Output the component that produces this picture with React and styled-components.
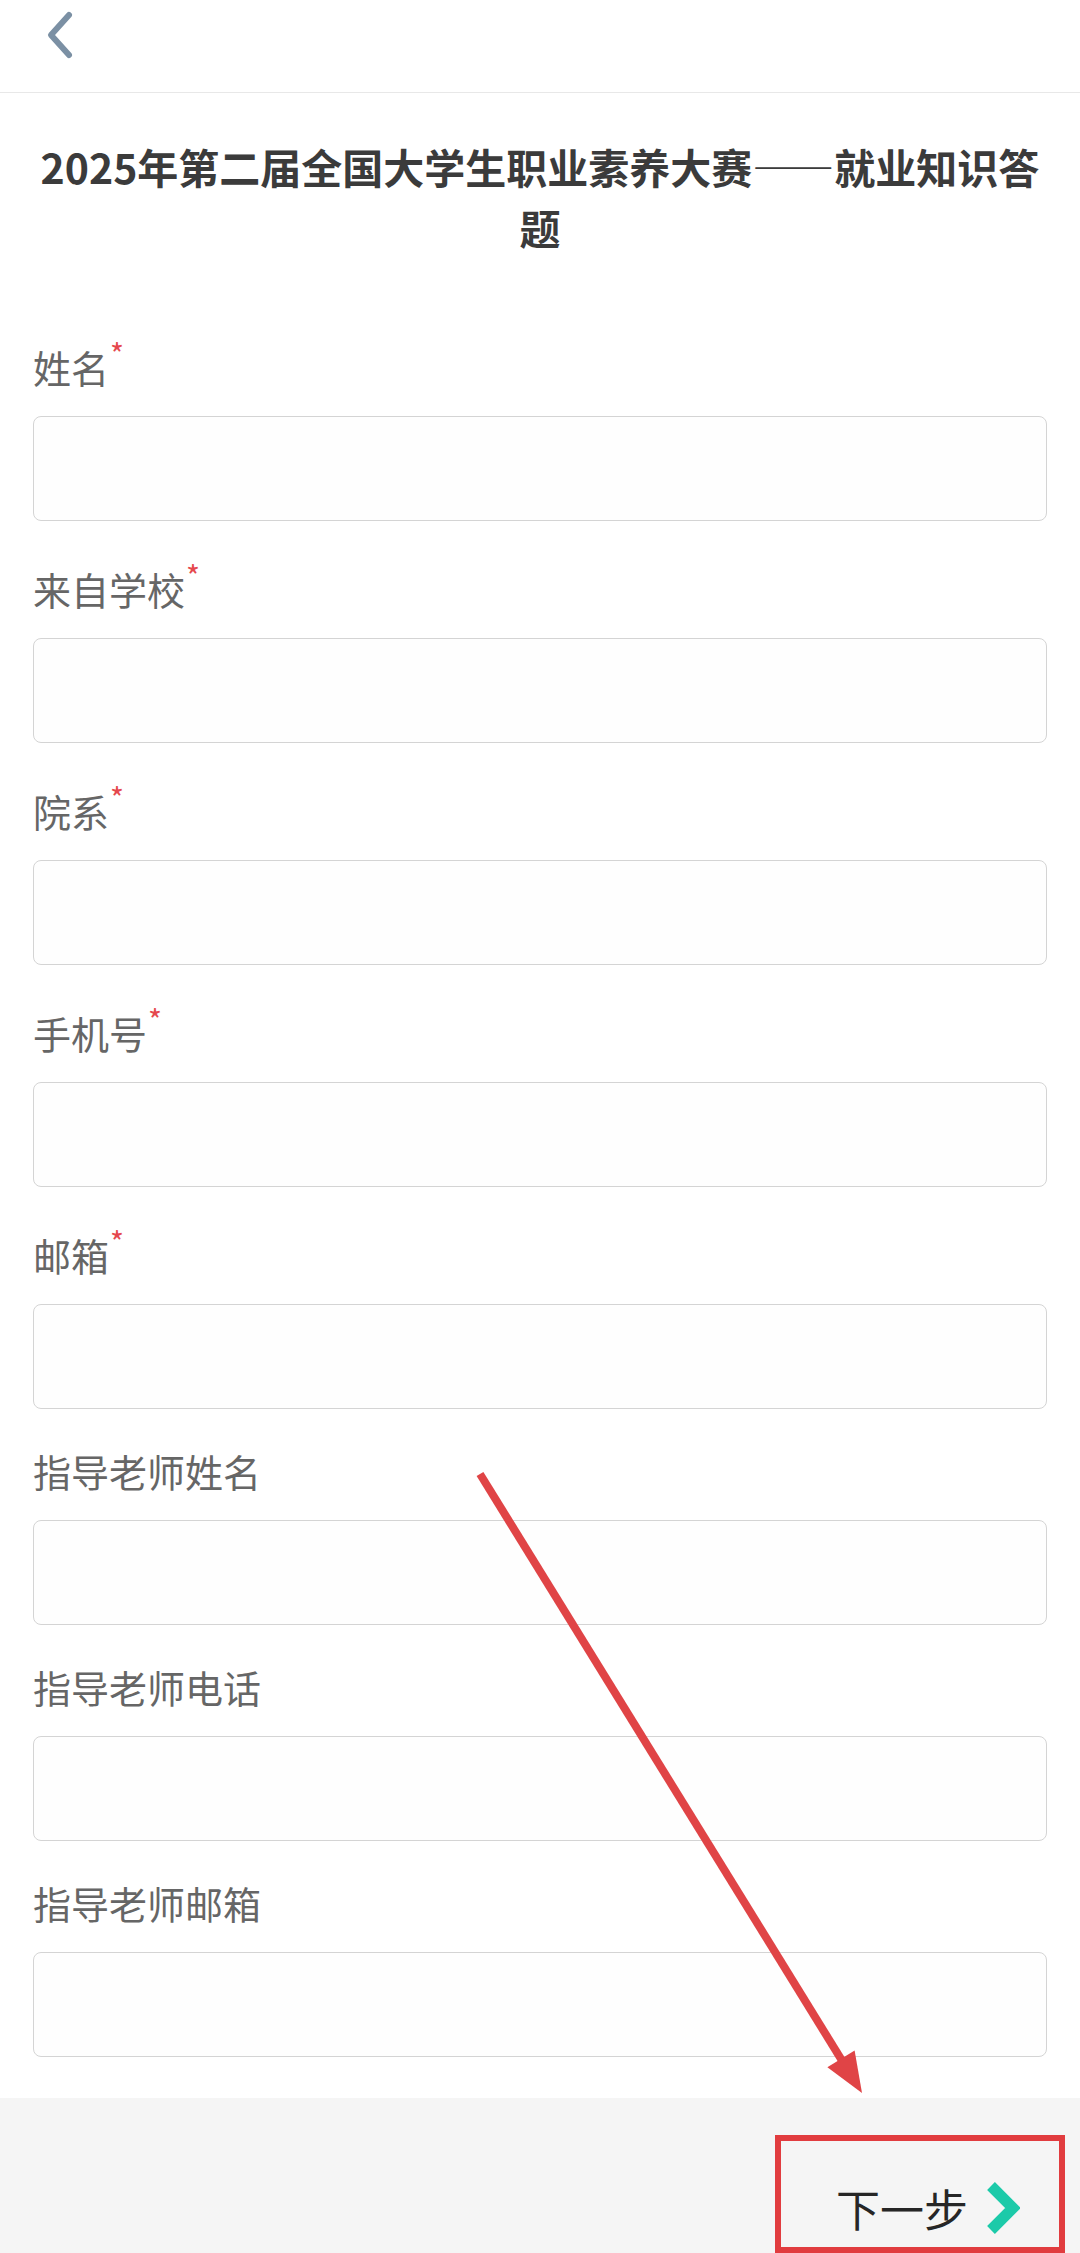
import React from 'react'
import styled, {createGlobalStyle} from 'styled-components'

const GlobalStyle = createGlobalStyle`
  html, body {
    margin: 0;
    padding: 0;
    background: #fff;
  }
  body {
    font-family: "Noto Sans CJK SC", "Noto Sans", sans-serif;
  }
  * {
    box-sizing: border-box;
  }
`

const Page = styled.div`
  position: relative;
  width: 1080px;
  min-height: 2253px;
  display: flex;
  flex-direction: column;
  background: #fff;
`

const Header = styled.header`
  height: 93px;
  display: flex;
  align-items: center;
  padding-left: 44px;
  border-bottom: 1px solid #e8e8e8;
`

const BackButton = styled.button`
  width: 34px;
  height: 50px;
  padding: 0;
  border: 0;
  background: none;
  display: flex;
  align-items: center;
  justify-content: center;
  margin-top: -22px;
`

const Title = styled.h1`
  margin: 43px 0 0;
  padding: 0 30px;
  font-size: 41px;
  line-height: 61px;
  font-weight: 700;
  color: #3b3b3b;
  text-align: center;
`

const Form = styled.form`
  display: flex;
  flex-direction: column;
  padding: 78px 33px 4px;
`

const Field = styled.div`
  display: flex;
  flex-direction: column;
  margin-bottom: 37px;
`

const Label = styled.label`
  padding-top: ${p => (p.$required ? '6px' : '0')};
  font-size: 38px;
  line-height: 50px;
  color: #666;
  margin-bottom: 24px;
`

const Star = styled.span`
  vertical-align: top;
  font-size: 30px;
  line-height: 1;
  color: #e5484d;
  margin-left: 1px;
  position: relative;
  top: -4px;
`

const Input = styled.input`
  height: 105px;
  width: 100%;
  border: 1.5px solid #d4d4d4;
  border-radius: 8px;
  background: #fefefe;
  padding: 0 24px;
  font-size: 34px;
  font-family: inherit;
  outline: none;
`

const Footer = styled.footer`
  position: relative;
  flex: 1;
  min-height: 155px;
  background: #f5f5f5;
  display: flex;
  justify-content: flex-end;
  align-items: flex-start;
  padding: 80px 60px 0 0;
`

const NextButton = styled.button`
  display: flex;
  align-items: center;
  gap: 18px;
  border: 0;
  background: none;
  padding: 0;
  font-family: inherit;
  font-size: 44px;
  line-height: 60px;
  color: #262626;
`

const MarkBox = styled.div`
  position: absolute;
  right: 15px;
  top: 37px;
  bottom: 0;
  width: 290px;
  border: 6px solid #e13c3f;
  pointer-events: none;
`

const ArrowLayer = styled.svg`
  position: absolute;
  left: 0;
  top: 0;
  width: 1080px;
  height: 2253px;
  pointer-events: none;
`

const fields = [
  {label: '姓名', required: true},
  {label: '来自学校', required: true},
  {label: '院系', required: true},
  {label: '手机号', required: true},
  {label: '邮箱', required: true},
  {label: '指导老师姓名'},
  {label: '指导老师电话'},
  {label: '指导老师邮箱'}
]

const BackIcon = () => (
  <svg width="34" height="50" viewBox="0 0 34 50">
    <polyline points="25,5 7,25 25,45" fill="none" stroke="#7b90a4"
      strokeWidth="6" strokeLinecap="round" strokeLinejoin="round" />
  </svg>
)

const NextIcon = () => (
  <svg width="34" height="52" viewBox="0 0 34 52">
    <polyline points="5,4 27,26 5,48" fill="none" stroke="#1ccaa9"
      strokeWidth="11" strokeLinejoin="miter" />
  </svg>
)

// annotation arrow pointing at the next-step button
const Arrow = () => {
  const x1 = 480, y1 = 1474, x2 = 862, y2 = 2093
  const len = Math.hypot(x2 - x1, y2 - y1)
  const dx = (x2 - x1) / len, dy = (y2 - y1) / len
  const head = 40, half = 16
  const bx = x2 - dx * head, by = y2 - dy * head
  const wing1 = `${bx + dy * half},${by - dx * half}`
  const wing2 = `${bx - dy * half},${by + dx * half}`
  return (
    <ArrowLayer viewBox="0 0 1080 2253">
      <line x1={x1} y1={y1} x2={bx + dx * 4} y2={by + dy * 4}
        stroke="#e04446" strokeWidth="8" />
      <polygon points={`${x2},${y2} ${wing1} ${wing2}`} fill="#e04446" />
    </ArrowLayer>
  )
}

const App = () => (
  <Page lang="zh-CN">
    <GlobalStyle />
    <Header>
      <BackButton type="button"><BackIcon /></BackButton>
    </Header>
    <Title>2025年第二届全国大学生职业素养大赛——就业知识答题</Title>
    <Form onSubmit={e => e.preventDefault()}>
      {fields.map(f => (
        <Field key={f.label}>
          <Label $required={f.required}>
            {f.label}
            {f.required && <Star>*</Star>}
          </Label>
          <Input type="text" />
        </Field>
      ))}
    </Form>
    <Footer>
      <NextButton type="button">
        下一步
        <NextIcon />
      </NextButton>
      <MarkBox />
    </Footer>
    <Arrow />
  </Page>
)

export default App
